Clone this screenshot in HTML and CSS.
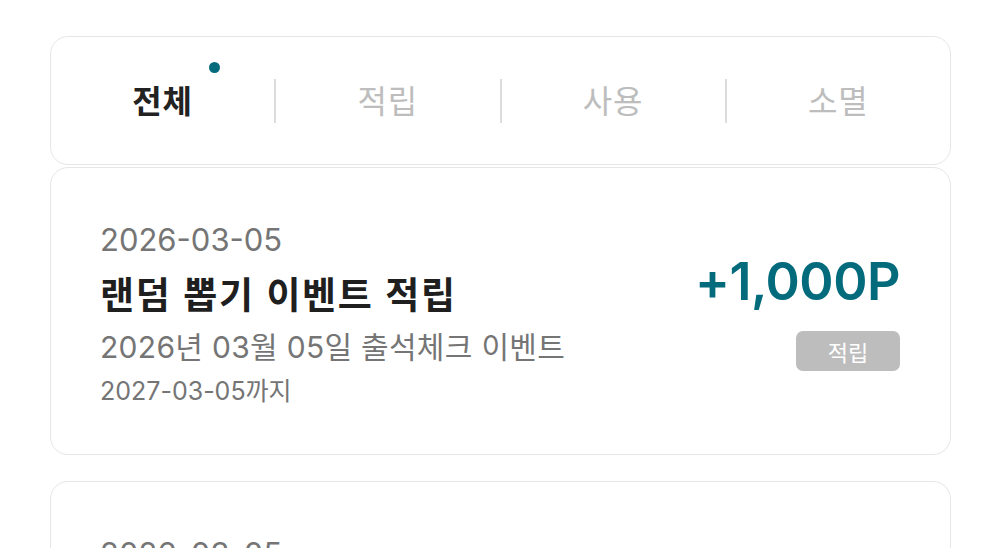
FILE: index.html
```html
<!DOCTYPE html>
<html lang="ko">
<head>
<meta charset="utf-8">
<link rel="stylesheet" href="styles.css">
</head>
<body>
<div class="page">
  <nav class="tabs">
    <div class="tab active"><span class="label">전체<i class="dot"></i></span></div>
    <span class="sep"></span>
    <div class="tab"><span class="label">적립</span></div>
    <span class="sep"></span>
    <div class="tab"><span class="label">사용</span></div>
    <span class="sep"></span>
    <div class="tab"><span class="label">소멸</span></div>
  </nav>

  <article class="card">
    <div class="info">
      <div class="date">2026-03-05</div>
      <div class="title">랜덤 뽑기 이벤트 적립</div>
      <div class="desc">2026년 03월 05일 출석체크 이벤트</div>
      <div class="expire">2027-03-05까지</div>
    </div>
    <div class="side">
      <div class="amount">+1,000P</div>
      <span class="badge">적립</span>
    </div>
  </article>

  <article class="card second">
    <div class="info">
      <div class="date">2026-03-05</div>
    </div>
  </article>
</div>
</body>
</html>
```

FILE: styles.css
```css
* { box-sizing: border-box; }
html, body { margin: 0; padding: 0; background: #fff; }
body {
  font-family: Inter, "Noto Sans CJK KR", sans-serif;
  overflow: hidden;
  height: 548px;
}
.page {
  width: 901px;
  height: 548px;
  margin-left: 50px;
  padding-top: 36px;
  display: flex;
  flex-direction: column;
  overflow: hidden;
}
.tabs {
  flex: none;
  height: 129px;
  border: 1px solid #e6e6e6;
  border-radius: 18px;
  display: flex;
  align-items: center;
  background: #fff;
}
.tab {
  flex: 1;
  display: flex;
  justify-content: center;
  align-items: center;
}
.label {
  position: relative;
  font-family: "Noto Sans CJK KR", sans-serif;
  font-size: 32px;
  letter-spacing: 1px;
  color: #bdbdbd;
  line-height: 1;
  margin-top: -3px;
}
.tab.active .label { color: #222; font-weight: 700; }
.dot {
  position: absolute;
  right: -27px;
  top: -21px;
  width: 11px;
  height: 11px;
  border-radius: 50%;
  background: #046b7c;
}
.sep {
  width: 2px;
  height: 44px;
  background: #dcdcdc;
}
.card {
  flex: none;
  margin-top: 2px;
  height: 288px;
  border: 1px solid #e6e6e6;
  border-radius: 18px;
  padding: 52px 50px 0 49px;
  display: flex;
  justify-content: space-between;
}
.card.second { margin-top: 26px; height: 200px; }
.info { display: flex; flex-direction: column; }
.date {
  font-size: 31px;
  color: #757575;
  line-height: 40px;
}
.title {
  font-family: "Noto Sans CJK KR", sans-serif;
  font-size: 37px;
  font-weight: 700;
  letter-spacing: 1.6px;
  color: #1f1f1f;
  line-height: 54px;
  margin-top: 6px;
}
.desc {
  font-size: 30px;
  letter-spacing: 0.3px;
  color: #757575;
  line-height: 54px;
}
.expire {
  font-size: 25px;
  color: #757575;
  line-height: 34px;
}
.side {
  display: flex;
  flex-direction: column;
  align-items: flex-end;
  padding-top: 32px;
}
.amount {
  font-size: 52px;
  font-weight: 600;
  color: #046b7c;
  line-height: 60px;
  letter-spacing: -0.5px;
}
.badge {
  margin-top: 19px;
  width: 104px;
  height: 40px;
  border-radius: 7px;
  background: #bdbdbd;
  color: #fff;
  font-family: "Noto Sans CJK KR", sans-serif;
  font-size: 22px;
  display: flex;
  align-items: center;
  justify-content: center;
}
```
